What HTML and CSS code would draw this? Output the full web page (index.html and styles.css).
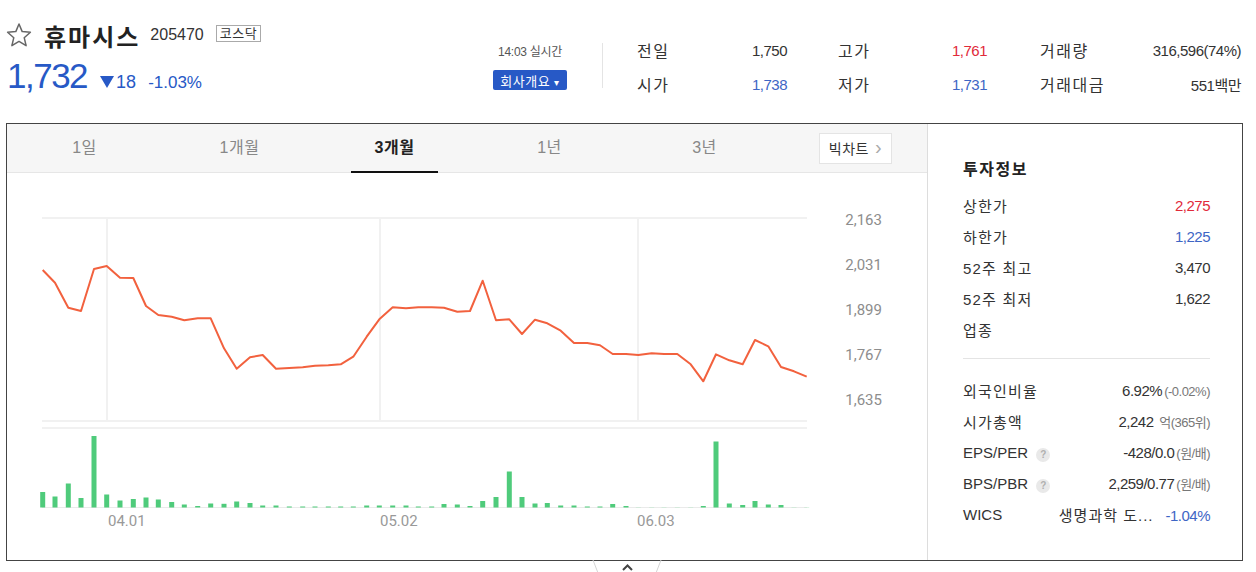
FILE: index.html
```html
<!DOCTYPE html>
<html lang="ko">
<head>
    <meta charset="UTF-8">
    <meta name="viewport" content="width=device-width, initial-scale=1.0">
    <title>휴마시스 - 종목정보</title>
    <link rel="stylesheet" href="styles.css">
</head>
<body>

    <!-- Stock summary header -->
    <div class="stock-head">
        <div class="title-block">
            <div class="title-row">
                <svg class="star" width="26" height="26" viewBox="0 0 26 26">
                    <polygon points="13,2 16.2,9.6 24.4,10.3 18.2,15.7 20.1,23.7 13,19.4 5.9,23.7 7.8,15.7 1.6,10.3 9.8,9.6"
                             fill="none" stroke="#666" stroke-width="1.5" stroke-linejoin="round"/>
                </svg>
                <span class="stock-name">휴마시스</span>
                <span class="stock-code">205470</span>
                <span class="market-badge">코스닥</span>
            </div>
            <div class="price-row">
                <span class="price">1,732</span>
                <span class="change">
                    <svg class="tri" width="14" height="12" viewBox="0 0 14 12"><polygon points="0,0 14,0 7,12" fill="currentColor"/></svg>18
                </span>
                <span class="rate">-1.03%</span>
            </div>
        </div>

        <div class="time-block">
            <span class="time">14:03 실시간</span>
            <button class="company-btn">회사개요 <span class="caret">▾</span></button>
        </div>
        <div class="divider"></div>

        <div class="stats">
            <div class="stat"><span class="lbl">전일</span><span class="val">1,750</span></div>
            <div class="stat"><span class="lbl">고가</span><span class="val up">1,761</span></div>
            <div class="stat"><span class="lbl">거래량</span><span class="val">316,596(74%)</span></div>
            <div class="stat"><span class="lbl">시가</span><span class="val down">1,738</span></div>
            <div class="stat"><span class="lbl">저가</span><span class="val down">1,731</span></div>
            <div class="stat"><span class="lbl">거래대금</span><span class="val">551백만</span></div>
        </div>
    </div>

    <!-- Chart + investment info -->
    <div class="chart-box">
        <div class="chart-section">
            <div class="tab-bar">
                <span class="tab">1일</span>
                <span class="tab">1개월</span>
                <span class="tab active">3개월</span>
                <span class="tab">1년</span>
                <span class="tab">3년</span>
                <span class="big-chart">빅차트 <span class="arrow">&#x203A;</span></span>
            </div>
            <div class="chart-area">
                <svg id="chart" width="920" height="387" viewBox="7 173 920 387">
                    <g class="grid">
                        <line x1="42" y1="218" x2="807" y2="218"/>
                        <line x1="42" y1="421" x2="807" y2="421"/>
                        <line x1="42" y1="428" x2="807" y2="428"/>
                        <line x1="107" y1="218" x2="107" y2="421"/>
                        <line x1="380" y1="218" x2="380" y2="421"/>
                        <line x1="638" y1="218" x2="638" y2="421"/>
                        <line class="base" x1="42" y1="507.5" x2="807" y2="507.5"/>
                    </g>
                    <g id="volumeBars"></g>
                    <polyline id="priceLine" fill="none" stroke="#f2613e" stroke-width="2" stroke-linejoin="round"/>
                    <g class="y-labels">
                        <text x="882" y="225">2,163</text>
                        <text x="882" y="270">2,031</text>
                        <text x="882" y="315">1,899</text>
                        <text x="882" y="360">1,767</text>
                        <text x="882" y="405">1,635</text>
                    </g>
                    <g class="x-labels">
                        <text x="108" y="526">04.01</text>
                        <text x="380" y="526">05.02</text>
                        <text x="637" y="526">06.03</text>
                    </g>
                </svg>
            </div>
        </div>

        <div class="info-panel">
            <h3>투자정보</h3>
            <div class="info-row"><span class="lbl">상한가</span><span class="up">2,275</span></div>
            <div class="info-row"><span class="lbl">하한가</span><span class="down">1,225</span></div>
            <div class="info-row"><span class="lbl">52주 최고</span><span>3,470</span></div>
            <div class="info-row"><span class="lbl">52주 최저</span><span>1,622</span></div>
            <div class="info-row"><span class="lbl">업종</span><span></span></div>
            <div class="info-line"></div>
            <div class="info-row first"><span class="lbl">외국인비율</span><span>6.92%<small>(-0.02%)</small></span></div>
            <div class="info-row"><span class="lbl">시가총액</span><span>2,242 <small>억(365위)</small></span></div>
            <div class="info-row"><span>EPS/PER <i class="help">?</i></span><span>-428/0.0<small>(원/배)</small></span></div>
            <div class="info-row"><span>BPS/PBR <i class="help">?</i></span><span>2,259/0.77<small>(원/배)</small></span></div>
            <div class="info-row"><span>WICS</span><span><b class="sector">생명과학 도...</b><em class="down">-1.04%</em></span></div>
        </div>

        <!-- fold toggle under the box -->
        <svg class="fold-toggle" width="72" height="13" viewBox="0 0 72 13">
            <line x1="1" y1="0" x2="6" y2="13" stroke="#d5d5d5"/>
            <line x1="69" y1="0" x2="64" y2="13" stroke="#d5d5d5"/>
            <polyline points="31,10 35.5,5.5 40,10" fill="none" stroke="#444" stroke-width="2"/>
        </svg>
    </div>

    <script>
        // daily close prices already mapped to chart y (3 months)
        const linePoints = [
            [42.7,270],[55,282.7],[68.3,307.7],[81,311],[94,269],[106.7,266],[120,277.7],[133.3,278],
            [146,306],[158.3,315],[171.7,316.7],[184.3,320.3],[197.7,318.3],[210.7,318.3],[224,348.3],
            [236.7,368.7],[250,357.3],[262.7,355],[276,368.7],[289.3,368],[302.7,367.3],[315,365.7],
            [328.3,365.3],[340.7,364.3],[353.3,356.7],[366.7,336.7],[379.3,319.3],[392.7,307.3],[406,308.3],
            [418.3,307.3],[431.7,307.3],[444,307.7],[457.3,311.7],[470,311],[482.7,280.7],[496,320.3],
            [509.3,319.3],[522,334],[535,319.7],[547.3,323.3],[560.7,330.7],[574,343],[587.3,343],[600,345.3],
            [612.7,354],[626,354],[638.3,355],[651.7,353.3],[664,354],[677.3,354],[690.7,364.3],[703.3,381.3],
            [716,354.3],[729.3,360.3],[742.7,364.3],[755,340],[768.3,346.3],[781,367],[794,371.3],[806.7,376.7]
        ];

        // volume bar heights in px
        const volumes = [
            15.5,11,24,9.5,71.5,13,7,8.5,10,8,5.5,3,1.5,4,3.7,6,4.5,2,2,1,
            1,1,1,1,1,2,2,2,2,1,1,3.5,3,1.5,6.5,10.5,36,10.5,4,4.5,
            2,2,1,1,3.5,1.5,0.5,0.5,0.5,0.5,0.5,1.5,66,4,2.5,6.5,3,2.5,0.5,0.5
        ];

        document.getElementById('priceLine').setAttribute('points', linePoints.map(p => p.join(',')).join(' '));

        const bars = document.getElementById('volumeBars');
        const ns = 'http://www.w3.org/2000/svg';
        volumes.forEach((h, i) => {
            const rect = document.createElementNS(ns, 'rect');
            rect.setAttribute('x', linePoints[i][0] - 2.5);
            rect.setAttribute('y', 507.5 - h);
            rect.setAttribute('width', 5);
            rect.setAttribute('height', h);
            rect.setAttribute('fill', h < 1 ? '#bfe9cd' : '#4fcb7b');
            bars.appendChild(rect);
        });
    </script>

</body>
</html>
```

FILE: styles.css
```css
:root {
    --blue: #2759c6; --blue-light: #3e66c5; --red: #e12a3a;
    --text-dark: #222; --text: #333; --text-gray: #777; --line: #e4e4e4;
}
body {
    margin: 0; font-family: "Liberation Sans", "Noto Sans CJK KR", sans-serif;
    color: var(--text); background: #fff; width: 1256px; height: 572px; overflow: hidden;
}

/* header */
.stock-head {
    display: flex; align-items: flex-start; height: 123px; box-sizing: border-box;
    padding: 18px 13px 0 6px;
}
.title-block { flex: 1; }
.title-row { display: flex; align-items: center; height: 34px; }
.star { margin-right: 12px; }
.stock-name { font-size: 24px; font-weight: 700; color: var(--text-dark); letter-spacing: 2px; }
.stock-code { font-size: 16px; margin-left: 10px; color: var(--text); }
.market-badge {
    font-size: 13px; line-height: 15px; border: 1px solid #aaa; padding: 0 3px;
    margin-left: 12px; color: var(--text); margin-top: -4px; letter-spacing: 0.5px;
}
.price-row { display: flex; align-items: baseline; height: 40px; margin-top: 4px; color: var(--blue); padding-left: 1px; }
.price { font-size: 35px; letter-spacing: -1.5px; }
.change { font-size: 18px; margin-left: 13px; }
.change .tri { margin-right: 2px; vertical-align: 0; }
.rate { font-size: 17px; margin-left: 12px; }

.time-block { width: 78px; margin-top: 26px; margin-right: 33px; display: flex; flex-direction: column; align-items: center; }
.time { font-size: 12px; line-height: 16px; color: #555; letter-spacing: -0.3px; }
.company-btn {
    margin-top: 10px; height: 20px; width: 74px; background: var(--blue); color: #fff;
    border: none; border-radius: 2px; font-family: inherit; font-size: 13px; padding: 0;
    letter-spacing: 0.5px;
}
.company-btn .caret { font-size: 10px; }
.divider { width: 1px; height: 45px; margin-top: 25px; margin-right: 34px; background: var(--line); }

.stats {
    display: grid; grid-template-columns: 150px 149px 203px; column-gap: 51px;
    width: 606px; margin-top: 15px;
}
.stats .stat:nth-child(3n+3) { margin-left: 2px; }
.stat { display: flex; justify-content: space-between; align-items: center; height: 34px; font-size: 16px; }
.stat .lbl { letter-spacing: 1.5px; }
.stat .val { font-size: 15px; letter-spacing: -0.5px; }
.up { color: var(--red); }
.down { color: var(--blue-light); }

/* chart box */
.chart-box {
    position: relative; display: flex; width: 1237px; height: 438px; box-sizing: border-box;
    margin-left: 6px; border: 1px solid #444;
}
.chart-section { width: 920px; border-right: 1px solid #ddd; }
.tab-bar {
    display: flex; align-items: center; height: 48px; background: #f6f6f6;
    border-bottom: 1px solid #e6e6e6;
}
.tab {
    position: relative; width: 155px; text-align: center; line-height: 46px; padding-top: 1px;
    box-sizing: border-box; height: 48px; font-size: 16px; color: #888; letter-spacing: 0.5px;
}
.tab.active { color: var(--text-dark); font-weight: 700; }
.tab.active::after {
    content: ""; position: absolute; left: 34px; right: 34px; bottom: -1px;
    height: 2px; background: #111;
}
.big-chart {
    margin-left: 37px; width: 73px; height: 31px; box-sizing: border-box;
    background: #fff; border: 1px solid #e4e4e4; font-size: 14px; color: var(--text);
    display: flex; align-items: center; justify-content: center; gap: 6px; letter-spacing: 0.5px;
}
.big-chart .arrow { font-size: 20px; color: #aaa; line-height: 1; margin-top: -3px; }
.chart-area { height: 387px; }
#chart { display: block; }
.grid line { stroke: #f1f1f1; stroke-width: 2; }
.grid line.base { stroke: #eaeaea; stroke-width: 1; }
.y-labels text { font-family: Roboto, sans-serif; font-size: 15px; fill: #8d8d8d; text-anchor: end; }
.x-labels text { font-family: Roboto, sans-serif; font-size: 15px; fill: #999; }

/* investment info */
.info-panel { width: 314px; box-sizing: border-box; padding: 34px 32px 0 35px; }
.info-panel h3 { margin: 0; font-size: 16px; line-height: 24px; font-weight: 700; color: var(--text-dark); letter-spacing: 1.5px; }
.info-row {
    display: flex; justify-content: space-between; align-items: center;
    height: 31px; font-size: 15px; color: var(--text);
}
.info-row .lbl { letter-spacing: 1.2px; }
.info-panel h3 + .info-row { margin-top: 8px; }
.info-row span:last-child { letter-spacing: -0.5px; }
.info-row small { font-size: 13px; color: var(--text-gray); margin-left: 2px; }
.info-row .sector { font-weight: 400; letter-spacing: 1px; }
.info-row em { font-style: normal; margin-left: 12px; }
.info-line { height: 1px; background: var(--line); margin-top: 13px; }
.info-row.first { margin-top: 16px; }
.help {
    display: inline-block; width: 14px; height: 14px; border-radius: 50%; background: #e9e9e9;
    color: #b0b0b0; font-size: 10px; font-style: normal; font-weight: 700; line-height: 14px;
    text-align: center; margin-left: 4px; vertical-align: 0;
}
.fold-toggle { position: absolute; left: 585px; bottom: -13px; }
```
